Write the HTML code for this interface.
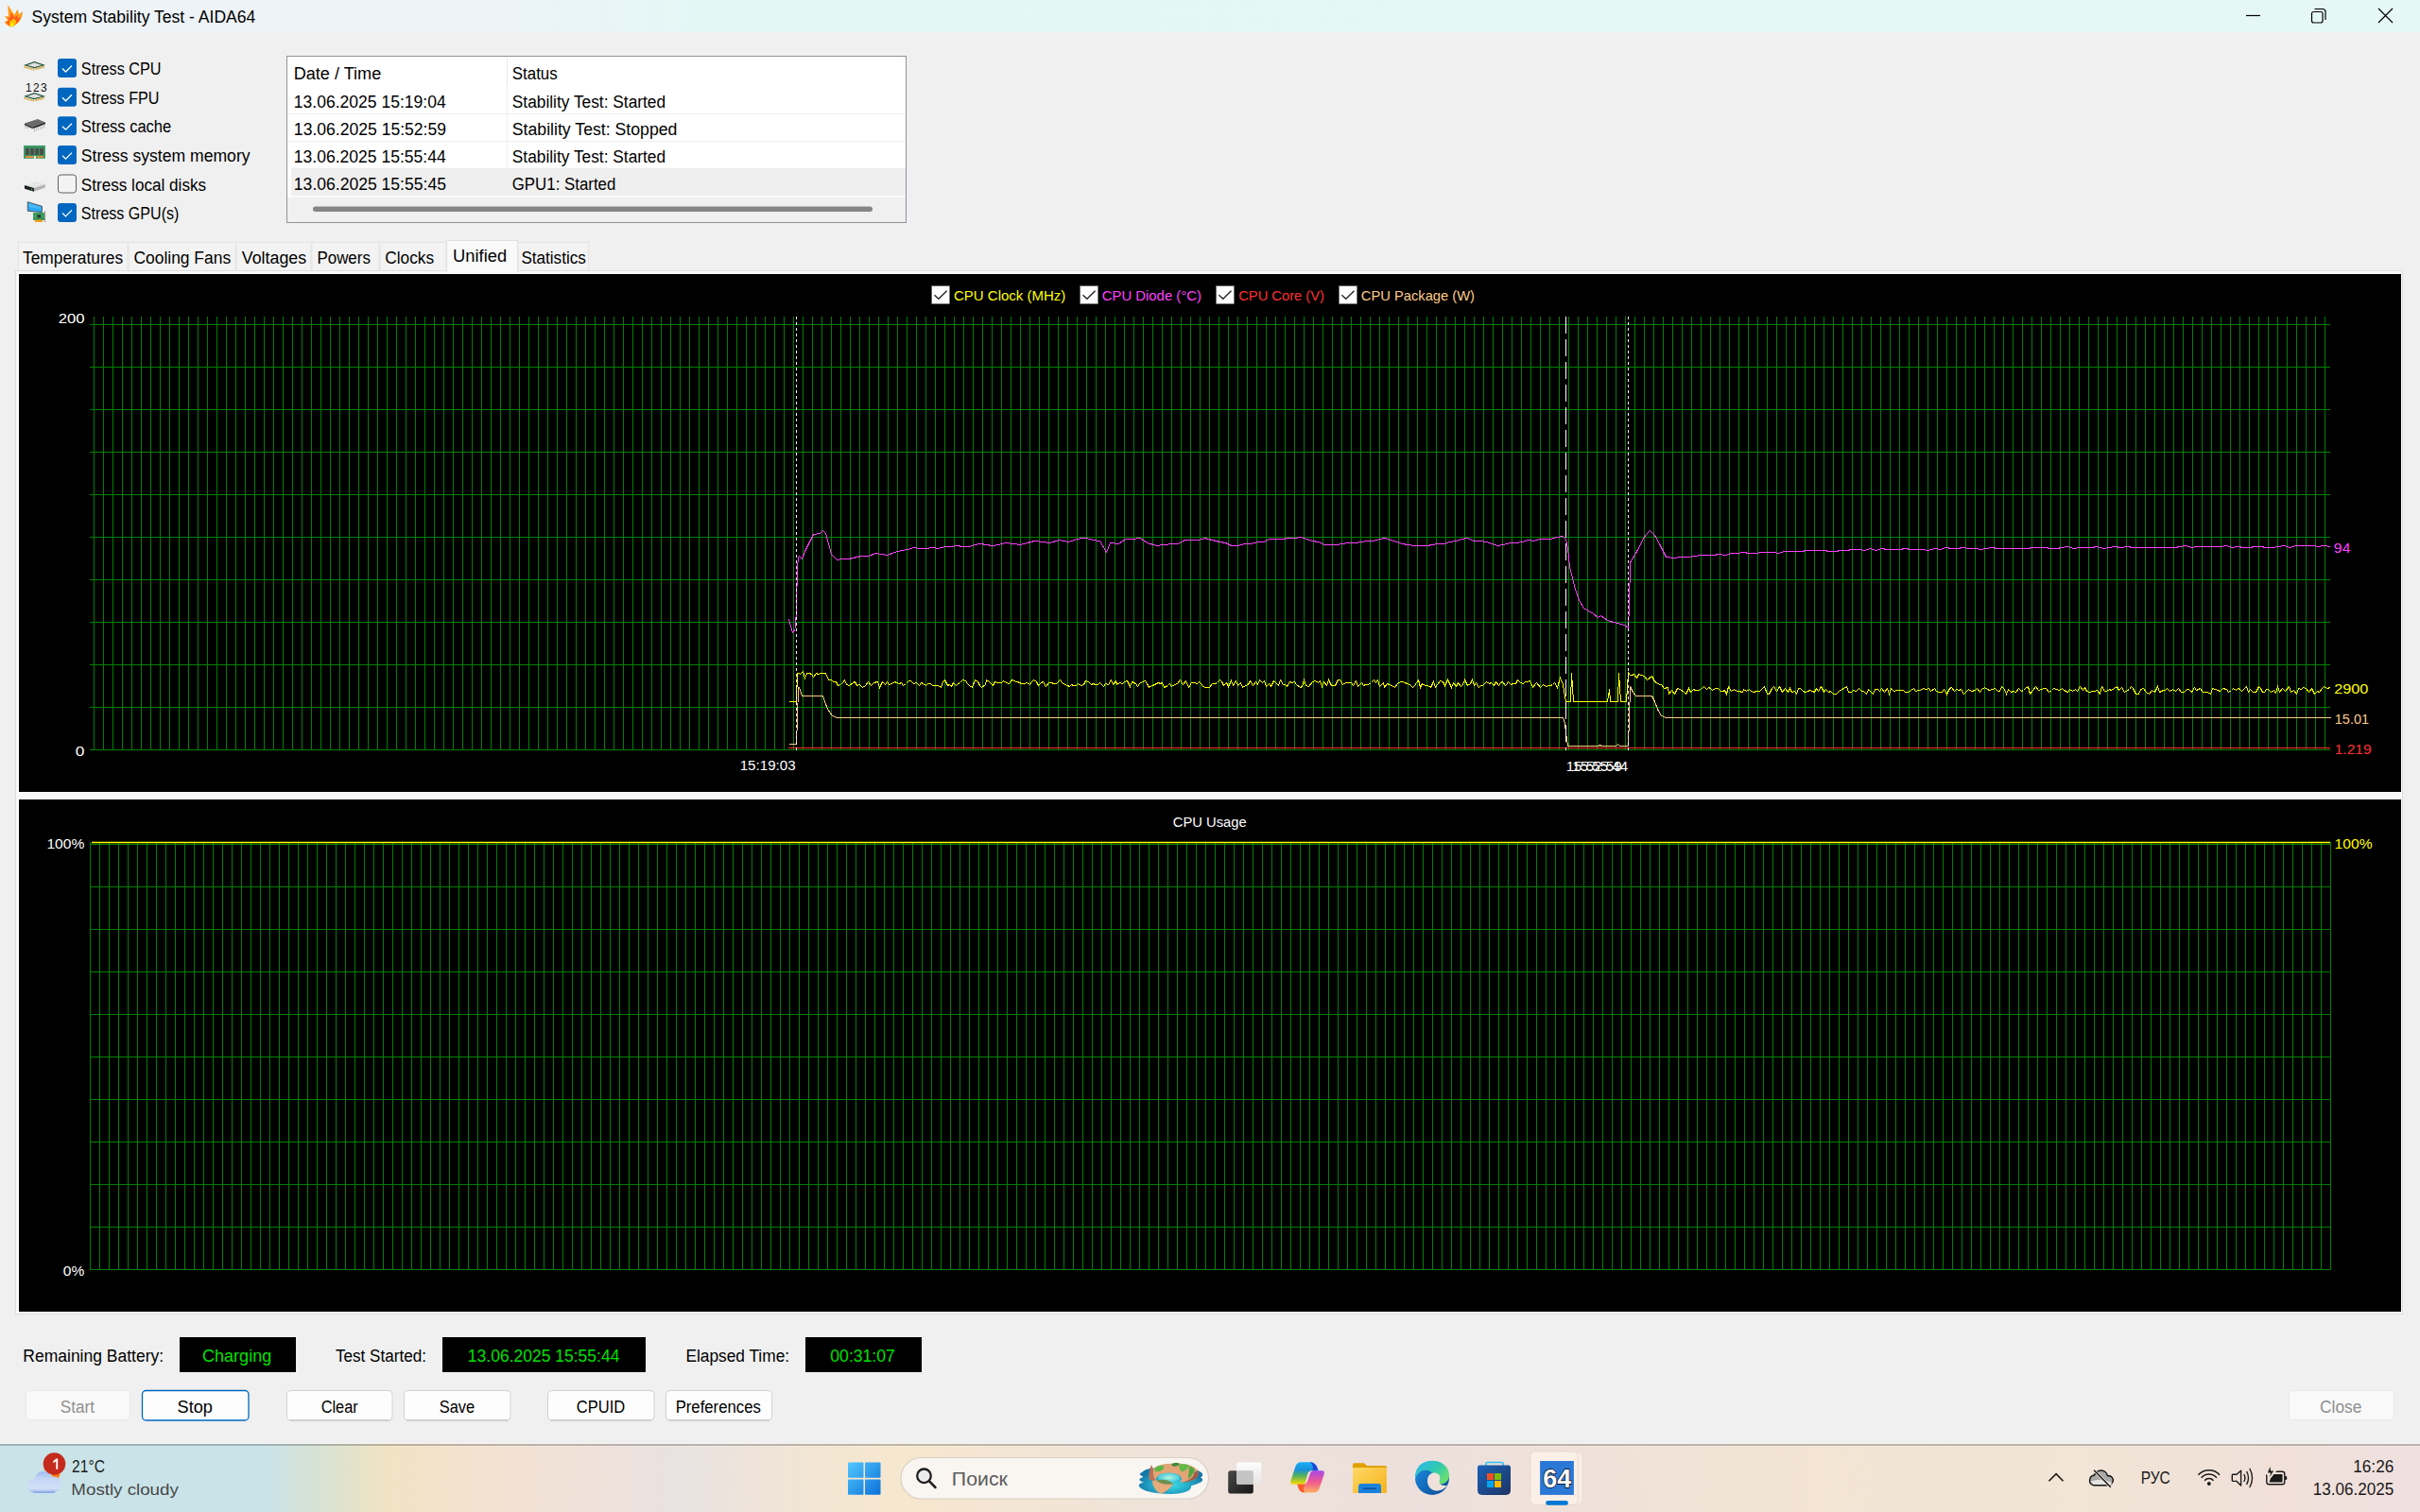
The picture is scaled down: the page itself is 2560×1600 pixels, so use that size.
<!DOCTYPE html>
<html><head><meta charset="utf-8"><title>System Stability Test - AIDA64</title>
<style>html,body{margin:0;padding:0;width:2560px;height:1600px;overflow:hidden;background:#f0f0f0}svg{display:block}text{white-space:pre}</style>
</head><body>
<svg width="2560" height="1600" viewBox="0 0 2560 1600" font-family="'Liberation Sans', sans-serif">
<defs>
<linearGradient id="tbar" x1="0" x2="2560" y1="0" y2="0" gradientUnits="userSpaceOnUse"><stop offset="0" stop-color="#eef3f6"/><stop offset="0.2" stop-color="#edf3f9"/><stop offset="0.29" stop-color="#e4f7f5"/><stop offset="1" stop-color="#e5f8f5"/></linearGradient>
<linearGradient id="task" x1="0" x2="2560" y1="0" y2="0" gradientUnits="userSpaceOnUse"><stop offset="0" stop-color="#c9e3e8"/><stop offset="0.11" stop-color="#c9e3e8"/><stop offset="0.14" stop-color="#dee2cc"/><stop offset="0.16" stop-color="#f1e3c4"/><stop offset="0.186" stop-color="#f3e2cd"/><stop offset="0.237" stop-color="#f0e1d8"/><stop offset="0.281" stop-color="#e9e2e1"/><stop offset="0.343" stop-color="#f3e6d2"/><stop offset="0.374" stop-color="#f6e7cf"/><stop offset="0.5" stop-color="#eee2dc"/><stop offset="0.586" stop-color="#ede0dc"/><stop offset="0.664" stop-color="#f0e2d8"/><stop offset="0.75" stop-color="#f3e4d4"/><stop offset="0.86" stop-color="#f2e4d6"/><stop offset="0.94" stop-color="#f0e0d8"/><stop offset="1.0" stop-color="#f0e0e0"/></linearGradient>
<linearGradient id="winlogo" x1="897" y1="1547" x2="932" y2="1582" gradientUnits="userSpaceOnUse">
 <stop offset="0" stop-color="#52c8ff"/><stop offset="1" stop-color="#0a6fd8"/>
</linearGradient>
</defs>
<rect x="0" y="0" width="2560" height="1528" fill="#f0f0f0"/>
<rect x="0" y="0" width="2560" height="34" fill="url(#tbar)"/>
<g>
<path d="M12 28.6 C8 27.4 5.5 25.5 4.8 23.3 L8.3 21.6 L4.9 17 L9 17.4 L8.3 5.3 L15.3 15.8 L18.6 9.8 L20.2 15.6 L23.9 12 C23.8 19.5 19.5 26 12 28.6 Z" fill="#ff9a1a"/>
<path d="M12 27.6 C9 26.4 7.3 24.5 7 23.2 L9.6 21.4 L8.4 18.3 L11 18.8 L11.3 13.5 L15.2 18.6 L18.3 16.3 L19 19.8 L21.8 18 C20.8 22.5 17 26 12 27.6 Z" fill="#ff5a1c"/>
<path d="M12 28.4 C10.3 27 9.6 24.5 10.2 22.4 L13.2 21 L14.6 19.2 L16.8 21.8 C17.6 24.8 15.5 27.4 12 28.4 Z" fill="#ffc400"/>
<path d="M12 28.4 C11 27.6 10.8 26.3 11.3 25.3 L13.6 24.6 C14.3 26.3 13.5 27.6 12 28.4 Z" fill="#ffff10"/>
</g>
<text x="33.60" y="24.30" font-size="18" fill="#000" textLength="236.71" lengthAdjust="spacingAndGlyphs" >System Stability Test - AIDA64</text>
<path d="M2376 16.5 H2391" stroke="#000" stroke-width="1.2"/>
<rect x="2445.5" y="12.5" width="11.5" height="11.5" rx="2" fill="none" stroke="#000" stroke-width="1.2"/>
<path d="M2448.5 9.5 H2457 Q2460 9.5 2460 12.5 V21" fill="none" stroke="#000" stroke-width="1.2"/>
<path d="M2516 9 L2531 24 M2531 9 L2516 24" stroke="#000" stroke-width="1.2"/>
<rect x="61" y="62.0" width="20" height="20" rx="3" fill="#0067c0"/>
<path d="M66 72.5 L69.5 76.0 L76 69.5" fill="none" stroke="#fff" stroke-width="1.3"/>
<text x="85.86" y="79.00" font-size="18" fill="#000" textLength="84.69" lengthAdjust="spacingAndGlyphs" >Stress CPU</text>
<rect x="61" y="92.8" width="20" height="20" rx="3" fill="#0067c0"/>
<path d="M66 103.2 L69.5 106.8 L76 100.2" fill="none" stroke="#fff" stroke-width="1.3"/>
<text x="85.87" y="109.75" font-size="18" fill="#000" textLength="82.68" lengthAdjust="spacingAndGlyphs" >Stress FPU</text>
<rect x="61" y="123.2" width="20" height="20" rx="3" fill="#0067c0"/>
<path d="M66 133.7 L69.5 137.2 L76 130.7" fill="none" stroke="#fff" stroke-width="1.3"/>
<text x="85.85" y="140.20" font-size="18" fill="#000" textLength="95.38" lengthAdjust="spacingAndGlyphs" >Stress cache</text>
<rect x="61" y="154.1" width="20" height="20" rx="3" fill="#0067c0"/>
<path d="M66 164.6 L69.5 168.1 L76 161.6" fill="none" stroke="#fff" stroke-width="1.3"/>
<text x="85.80" y="171.10" font-size="18" fill="#000" textLength="178.73" lengthAdjust="spacingAndGlyphs" >Stress system memory</text>
<rect x="61.5" y="185.0" width="19" height="19" rx="3" fill="#f3f3f3" stroke="#5e5e5e" stroke-width="1"/>
<text x="85.82" y="201.50" font-size="18" fill="#000" textLength="132.30" lengthAdjust="spacingAndGlyphs" >Stress local disks</text>
<rect x="61" y="214.9" width="20" height="20" rx="3" fill="#0067c0"/>
<path d="M66 225.4 L69.5 228.9 L76 222.4" fill="none" stroke="#fff" stroke-width="1.3"/>
<text x="85.87" y="231.90" font-size="18" fill="#000" textLength="103.53" lengthAdjust="spacingAndGlyphs" >Stress GPU(s)</text>
<path d="M25 68.9 L36.4 65 L48.1 69.1 L36.4 72.2 Z" fill="#1d5236"/><path d="M28.6 68.9 L36.4 66.3 L44.6 69.0 L36.4 71.0 Z" fill="#e0e0e0"/><path d="M26.2 69.9v2.2M28.1 70.4v2.2M30.0 70.9v2.2M31.9 71.4v2.2M33.8 71.9v2.2M35.7 72.4v2.2M38.3 71.7v2.2M40.2 71.2v2.2M42.1 70.7v2.2M44.0 70.2v2.2M45.9 69.7v2.2" stroke="#d09818" stroke-width="1.1"/>
<path d="M25 101.9 L36.4 98 L48.1 102.1 L36.4 105.2 Z" fill="#1d5236"/><path d="M28.6 101.9 L36.4 99.3 L44.6 102.0 L36.4 104.0 Z" fill="#e0e0e0"/><path d="M26.2 102.9v2.2M28.1 103.4v2.2M30.0 103.9v2.2M31.9 104.4v2.2M33.8 104.9v2.2M35.7 105.4v2.2M38.3 104.7v2.2M40.2 104.2v2.2M42.1 103.7v2.2M44.0 103.2v2.2M45.9 102.7v2.2" stroke="#d09818" stroke-width="1.1"/>
<text x="27" y="96.9" font-size="12" letter-spacing="1.3" fill="#111">123</text>
<g><path d="M26 130.6 L39.9 126.1 L48 129.4 L34.6 134.2 Z" fill="#6a6a6a"/><path d="M26 130.6 L34.6 134.2 L34.6 136.2 L26 132.6 Z" fill="#3a3a3a"/><path d="M34.6 134.2 L48 129.4 L48 131.2 L34.6 136.2 Z" fill="#222"/><path d="M36.3 135.5 V139.5 M38.4 134.8 V138.7 M40.5 134 V138 M42.6 133.2 V137.2 M44.7 132.4 V136.4 M46.8 131.6 V135.6 M27 133 V136 M29.2 133.8 V136.6" stroke="#b8b8c0" stroke-width="1"/></g>
<g><rect x="25" y="153.9" width="23" height="13.9" fill="#45a870"/><rect x="25.8" y="154.6" width="21.4" height="12.6" fill="#3a9060"/><rect x="27.1" y="157" width="3.7" height="6.8" fill="#4d4a4a"/><rect x="32.2" y="157" width="3.6" height="6.8" fill="#4d4a4a"/><rect x="37.2" y="157" width="3.6" height="6.8" fill="#4d4a4a"/><rect x="42.2" y="157" width="3.6" height="6.8" fill="#4d4a4a"/><rect x="27" y="165" width="8" height="2" fill="#e08a38"/><rect x="39" y="165" width="7" height="2" fill="#e08a38"/><rect x="35.8" y="165" width="2.2" height="2.8" fill="#f0f0f0"/></g>
<g><path d="M26 196 L38 191.9 L47.8 195 L36 199 Z" fill="#e6e6e8"/><path d="M26 196 L36 199 L36 202.8 L26 199.8 Z" fill="#1e1e1e"/><path d="M36 199 L47.8 195 L47.8 198.6 L36 202.8 Z" fill="#b4b4b6"/><circle cx="33.6" cy="200.3" r="0.9" fill="#2ab83a"/></g>
<g><path d="M29.3 213.7 L44.4 218.3 L44.4 224.6 L29.3 223.2 Z" fill="#2eaaf4" stroke="#3a3a3a" stroke-width="0.8"/><path d="M30.5 215 L43 218.8 L43 221 L30.5 219 Z" fill="#5cc4fa" opacity="0.6"/><rect x="35.1" y="225" width="12" height="7.6" fill="#3a9e5e"/><rect x="35.1" y="231.6" width="12" height="1" fill="#1f6a3a"/><rect x="39.4" y="227.3" width="3.8" height="3" fill="#333"/><rect x="37" y="232.6" width="8" height="2.4" fill="#f0a010"/><path d="M47.6 223.2 V235.2" stroke="#8a8a8a" stroke-width="0.9"/></g>
<rect x="303.5" y="59.5" width="655" height="176" fill="#fff" stroke="#8c949c" stroke-width="1"/>
<rect x="308" y="178" width="650" height="29.5" fill="#efefef"/>
<rect x="304" y="208" width="654" height="27" fill="#f0f0f0"/>
<path d="M304 208.5 H958" stroke="#fafafa" stroke-width="1"/>
<path d="M304 120.5 H958" stroke="#efefef" stroke-width="1"/>
<path d="M304 149.5 H958" stroke="#efefef" stroke-width="1"/>
<path d="M536.5 61 V92" stroke="#e8e8e8" stroke-width="1"/>
<path d="M536.5 93 V178" stroke="#f0f0f0" stroke-width="1"/>
<rect x="331" y="218.5" width="592" height="5.5" rx="2.75" fill="#858585"/>
<text x="310.72" y="84.10" font-size="18" fill="#000" textLength="92.49" lengthAdjust="spacingAndGlyphs" >Date / Time</text>
<text x="541.83" y="84.10" font-size="18" fill="#000" textLength="47.88" lengthAdjust="spacingAndGlyphs" >Status</text>
<text x="310.86" y="114.10" font-size="18" fill="#000" textLength="160.85" lengthAdjust="spacingAndGlyphs" >13.06.2025 15:19:04</text>
<text x="541.81" y="114.10" font-size="18" fill="#000" textLength="162.30" lengthAdjust="spacingAndGlyphs" >Stability Test: Started</text>
<text x="310.86" y="142.60" font-size="18" fill="#000" textLength="161.17" lengthAdjust="spacingAndGlyphs" >13.06.2025 15:52:59</text>
<text x="541.80" y="142.60" font-size="18" fill="#000" textLength="174.64" lengthAdjust="spacingAndGlyphs" >Stability Test: Stopped</text>
<text x="310.86" y="171.70" font-size="18" fill="#000" textLength="160.85" lengthAdjust="spacingAndGlyphs" >13.06.2025 15:55:44</text>
<text x="541.81" y="171.70" font-size="18" fill="#000" textLength="162.30" lengthAdjust="spacingAndGlyphs" >Stability Test: Started</text>
<text x="310.86" y="200.70" font-size="18" fill="#000" textLength="161.07" lengthAdjust="spacingAndGlyphs" >13.06.2025 15:55:45</text>
<text x="541.75" y="200.70" font-size="18" fill="#000" textLength="109.63" lengthAdjust="spacingAndGlyphs" >GPU1: Started</text>
<rect x="19.5" y="256.5" width="115.5" height="30" fill="#f3f3f3" stroke="#e3e3e3" stroke-width="1"/>
<rect x="136.0" y="256.5" width="113.0" height="30" fill="#f3f3f3" stroke="#e3e3e3" stroke-width="1"/>
<rect x="250.0" y="256.5" width="79.0" height="30" fill="#f3f3f3" stroke="#e3e3e3" stroke-width="1"/>
<rect x="330.0" y="256.5" width="71.0" height="30" fill="#f3f3f3" stroke="#e3e3e3" stroke-width="1"/>
<rect x="402.0" y="256.5" width="70.0" height="30" fill="#f3f3f3" stroke="#e3e3e3" stroke-width="1"/>
<rect x="548.0" y="256.5" width="74.5" height="30" fill="#f3f3f3" stroke="#e3e3e3" stroke-width="1"/>
<rect x="16.5" y="286.5" width="2525" height="1104" fill="#f8f8f8" stroke="#dedede" stroke-width="1"/>
<rect x="473" y="255" width="74" height="33" fill="#f9f9f9"/>
<path d="M472.5 288 V254.5 H547.5 V288" fill="none" stroke="#e0e0e0" stroke-width="1"/>
<text x="24.01" y="278.90" font-size="18" fill="#000" textLength="106.12" lengthAdjust="spacingAndGlyphs" >Temperatures</text>
<text x="141.41" y="278.90" font-size="18" fill="#000" textLength="102.72" lengthAdjust="spacingAndGlyphs" >Cooling Fans</text>
<text x="255.82" y="278.90" font-size="18" fill="#000" textLength="68.32" lengthAdjust="spacingAndGlyphs" >Voltages</text>
<text x="335.41" y="278.90" font-size="18" fill="#000" textLength="56.50" lengthAdjust="spacingAndGlyphs" >Powers</text>
<text x="407.32" y="278.90" font-size="18" fill="#000" textLength="51.80" lengthAdjust="spacingAndGlyphs" >Clocks</text>
<text x="479.09" y="276.70" font-size="18" fill="#000" textLength="56.99" lengthAdjust="spacingAndGlyphs" >Unified</text>
<text x="551.42" y="278.90" font-size="18" fill="#000" textLength="68.39" lengthAdjust="spacingAndGlyphs" >Statistics</text>
<rect x="19.5" y="289.5" width="2521" height="549" fill="#000" stroke="#fff" stroke-width="1"/>
<rect x="19.5" y="845.5" width="2521" height="543" fill="#000" stroke="#fff" stroke-width="1"/>
<path d="M99.5 335V794M109.5 335V794M119.5 335V794M129.5 335V794M139.5 335V794M149.5 335V794M159.5 335V794M169.5 335V794M179.5 335V794M189.5 335V794M199.5 335V794M209.5 335V794M219.5 335V794M229.5 335V794M239.5 335V794M249.5 335V794M259.5 335V794M269.5 335V794M279.5 335V794M289.5 335V794M299.5 335V794M309.5 335V794M319.5 335V794M329.5 335V794M339.5 335V794M349.5 335V794M359.5 335V794M369.5 335V794M379.5 335V794M389.5 335V794M399.5 335V794M409.5 335V794M419.5 335V794M429.5 335V794M439.5 335V794M449.5 335V794M459.5 335V794M469.5 335V794M479.5 335V794M489.5 335V794M499.5 335V794M509.5 335V794M519.5 335V794M529.5 335V794M539.5 335V794M549.5 335V794M559.5 335V794M569.5 335V794M579.5 335V794M589.5 335V794M599.5 335V794M609.5 335V794M619.5 335V794M629.5 335V794M639.5 335V794M649.5 335V794M659.5 335V794M669.5 335V794M679.5 335V794M689.5 335V794M699.5 335V794M709.5 335V794M719.5 335V794M729.5 335V794M739.5 335V794M749.5 335V794M759.5 335V794M769.5 335V794M779.5 335V794M789.5 335V794M799.5 335V794M809.5 335V794M819.5 335V794M829.5 335V794M839.5 335V794M849.5 335V794M859.5 335V794M869.5 335V794M879.5 335V794M889.5 335V794M899.5 335V794M909.5 335V794M919.5 335V794M929.5 335V794M939.5 335V794M949.5 335V794M959.5 335V794M969.5 335V794M979.5 335V794M989.5 335V794M999.5 335V794M1009.5 335V794M1019.5 335V794M1029.5 335V794M1039.5 335V794M1049.5 335V794M1059.5 335V794M1069.5 335V794M1079.5 335V794M1089.5 335V794M1099.5 335V794M1109.5 335V794M1119.5 335V794M1129.5 335V794M1139.5 335V794M1149.5 335V794M1159.5 335V794M1169.5 335V794M1179.5 335V794M1189.5 335V794M1199.5 335V794M1209.5 335V794M1219.5 335V794M1229.5 335V794M1239.5 335V794M1249.5 335V794M1259.5 335V794M1269.5 335V794M1279.5 335V794M1289.5 335V794M1299.5 335V794M1309.5 335V794M1319.5 335V794M1329.5 335V794M1339.5 335V794M1349.5 335V794M1359.5 335V794M1369.5 335V794M1379.5 335V794M1389.5 335V794M1399.5 335V794M1409.5 335V794M1419.5 335V794M1429.5 335V794M1439.5 335V794M1449.5 335V794M1459.5 335V794M1469.5 335V794M1479.5 335V794M1489.5 335V794M1499.5 335V794M1509.5 335V794M1519.5 335V794M1529.5 335V794M1539.5 335V794M1549.5 335V794M1559.5 335V794M1569.5 335V794M1579.5 335V794M1589.5 335V794M1599.5 335V794M1609.5 335V794M1619.5 335V794M1629.5 335V794M1639.5 335V794M1649.5 335V794M1659.5 335V794M1669.5 335V794M1679.5 335V794M1689.5 335V794M1699.5 335V794M1709.5 335V794M1719.5 335V794M1729.5 335V794M1739.5 335V794M1749.5 335V794M1759.5 335V794M1769.5 335V794M1779.5 335V794M1789.5 335V794M1799.5 335V794M1809.5 335V794M1819.5 335V794M1829.5 335V794M1839.5 335V794M1849.5 335V794M1859.5 335V794M1869.5 335V794M1879.5 335V794M1889.5 335V794M1899.5 335V794M1909.5 335V794M1919.5 335V794M1929.5 335V794M1939.5 335V794M1949.5 335V794M1959.5 335V794M1969.5 335V794M1979.5 335V794M1989.5 335V794M1999.5 335V794M2009.5 335V794M2019.5 335V794M2029.5 335V794M2039.5 335V794M2049.5 335V794M2059.5 335V794M2069.5 335V794M2079.5 335V794M2089.5 335V794M2099.5 335V794M2109.5 335V794M2119.5 335V794M2129.5 335V794M2139.5 335V794M2149.5 335V794M2159.5 335V794M2169.5 335V794M2179.5 335V794M2189.5 335V794M2199.5 335V794M2209.5 335V794M2219.5 335V794M2229.5 335V794M2239.5 335V794M2249.5 335V794M2259.5 335V794M2269.5 335V794M2279.5 335V794M2289.5 335V794M2299.5 335V794M2309.5 335V794M2319.5 335V794M2329.5 335V794M2339.5 335V794M2349.5 335V794M2359.5 335V794M2369.5 335V794M2379.5 335V794M2389.5 335V794M2399.5 335V794M2409.5 335V794M2419.5 335V794M2429.5 335V794M2439.5 335V794M2449.5 335V794M2459.5 335V794M95 343.5H2465M95 388.5H2465M95 433.5H2465M95 478.5H2465M95 523.5H2465M95 568.5H2465M95 613.5H2465M95 658.5H2465M95 703.5H2465M95 748.5H2465M95 793.5H2465" stroke="#008000" stroke-width="1" shape-rendering="crispEdges"/>
<path d="M95.5 891V1344M105.5 891V1344M115.5 891V1344M125.5 891V1344M135.5 891V1344M145.5 891V1344M155.5 891V1344M165.5 891V1344M175.5 891V1344M185.5 891V1344M195.5 891V1344M205.5 891V1344M215.5 891V1344M225.5 891V1344M235.5 891V1344M245.5 891V1344M255.5 891V1344M265.5 891V1344M275.5 891V1344M285.5 891V1344M295.5 891V1344M305.5 891V1344M315.5 891V1344M325.5 891V1344M335.5 891V1344M345.5 891V1344M355.5 891V1344M365.5 891V1344M375.5 891V1344M385.5 891V1344M395.5 891V1344M405.5 891V1344M415.5 891V1344M425.5 891V1344M435.5 891V1344M445.5 891V1344M455.5 891V1344M465.5 891V1344M475.5 891V1344M485.5 891V1344M495.5 891V1344M505.5 891V1344M515.5 891V1344M525.5 891V1344M535.5 891V1344M545.5 891V1344M555.5 891V1344M565.5 891V1344M575.5 891V1344M585.5 891V1344M595.5 891V1344M605.5 891V1344M615.5 891V1344M625.5 891V1344M635.5 891V1344M645.5 891V1344M655.5 891V1344M665.5 891V1344M675.5 891V1344M685.5 891V1344M695.5 891V1344M705.5 891V1344M715.5 891V1344M725.5 891V1344M735.5 891V1344M745.5 891V1344M755.5 891V1344M765.5 891V1344M775.5 891V1344M785.5 891V1344M795.5 891V1344M805.5 891V1344M815.5 891V1344M825.5 891V1344M835.5 891V1344M845.5 891V1344M855.5 891V1344M865.5 891V1344M875.5 891V1344M885.5 891V1344M895.5 891V1344M905.5 891V1344M915.5 891V1344M925.5 891V1344M935.5 891V1344M945.5 891V1344M955.5 891V1344M965.5 891V1344M975.5 891V1344M985.5 891V1344M995.5 891V1344M1005.5 891V1344M1015.5 891V1344M1025.5 891V1344M1035.5 891V1344M1045.5 891V1344M1055.5 891V1344M1065.5 891V1344M1075.5 891V1344M1085.5 891V1344M1095.5 891V1344M1105.5 891V1344M1115.5 891V1344M1125.5 891V1344M1135.5 891V1344M1145.5 891V1344M1155.5 891V1344M1165.5 891V1344M1175.5 891V1344M1185.5 891V1344M1195.5 891V1344M1205.5 891V1344M1215.5 891V1344M1225.5 891V1344M1235.5 891V1344M1245.5 891V1344M1255.5 891V1344M1265.5 891V1344M1275.5 891V1344M1285.5 891V1344M1295.5 891V1344M1305.5 891V1344M1315.5 891V1344M1325.5 891V1344M1335.5 891V1344M1345.5 891V1344M1355.5 891V1344M1365.5 891V1344M1375.5 891V1344M1385.5 891V1344M1395.5 891V1344M1405.5 891V1344M1415.5 891V1344M1425.5 891V1344M1435.5 891V1344M1445.5 891V1344M1455.5 891V1344M1465.5 891V1344M1475.5 891V1344M1485.5 891V1344M1495.5 891V1344M1505.5 891V1344M1515.5 891V1344M1525.5 891V1344M1535.5 891V1344M1545.5 891V1344M1555.5 891V1344M1565.5 891V1344M1575.5 891V1344M1585.5 891V1344M1595.5 891V1344M1605.5 891V1344M1615.5 891V1344M1625.5 891V1344M1635.5 891V1344M1645.5 891V1344M1655.5 891V1344M1665.5 891V1344M1675.5 891V1344M1685.5 891V1344M1695.5 891V1344M1705.5 891V1344M1715.5 891V1344M1725.5 891V1344M1735.5 891V1344M1745.5 891V1344M1755.5 891V1344M1765.5 891V1344M1775.5 891V1344M1785.5 891V1344M1795.5 891V1344M1805.5 891V1344M1815.5 891V1344M1825.5 891V1344M1835.5 891V1344M1845.5 891V1344M1855.5 891V1344M1865.5 891V1344M1875.5 891V1344M1885.5 891V1344M1895.5 891V1344M1905.5 891V1344M1915.5 891V1344M1925.5 891V1344M1935.5 891V1344M1945.5 891V1344M1955.5 891V1344M1965.5 891V1344M1975.5 891V1344M1985.5 891V1344M1995.5 891V1344M2005.5 891V1344M2015.5 891V1344M2025.5 891V1344M2035.5 891V1344M2045.5 891V1344M2055.5 891V1344M2065.5 891V1344M2075.5 891V1344M2085.5 891V1344M2095.5 891V1344M2105.5 891V1344M2115.5 891V1344M2125.5 891V1344M2135.5 891V1344M2145.5 891V1344M2155.5 891V1344M2165.5 891V1344M2175.5 891V1344M2185.5 891V1344M2195.5 891V1344M2205.5 891V1344M2215.5 891V1344M2225.5 891V1344M2235.5 891V1344M2245.5 891V1344M2255.5 891V1344M2265.5 891V1344M2275.5 891V1344M2285.5 891V1344M2295.5 891V1344M2305.5 891V1344M2315.5 891V1344M2325.5 891V1344M2335.5 891V1344M2345.5 891V1344M2355.5 891V1344M2365.5 891V1344M2375.5 891V1344M2385.5 891V1344M2395.5 891V1344M2405.5 891V1344M2415.5 891V1344M2425.5 891V1344M2435.5 891V1344M2445.5 891V1344M2455.5 891V1344M2465.5 891V1344M95 893.5H2466M95 938.5H2466M95 983.5H2466M95 1028.5H2466M95 1073.5H2466M95 1118.5H2466M95 1163.5H2466M95 1208.5H2466M95 1253.5H2466M95 1298.5H2466M95 1343.5H2466" stroke="#008000" stroke-width="1" shape-rendering="crispEdges"/>
<path d="M97 891.5H2465" stroke="#ffff00" stroke-width="1.3"/>
<text x="61.66" y="341.80" font-size="15.5" fill="#fff" textLength="27.79" lengthAdjust="spacingAndGlyphs" >200</text>
<text x="79.72" y="799.80" font-size="15.5" fill="#fff" textLength="9.66" lengthAdjust="spacingAndGlyphs" >0</text>
<text x="782.65" y="815.00" font-size="15.5" fill="#fff" textLength="59.02" lengthAdjust="spacingAndGlyphs" >15:19:03</text>
<text x="1656.64" y="815.90" font-size="15.5" fill="#fff" textLength="59.07" lengthAdjust="spacingAndGlyphs" >15:52:59</text>
<text x="1663.35" y="815.90" font-size="15.5" fill="#fff" textLength="58.69" lengthAdjust="spacingAndGlyphs" >15:55:44</text>
<text x="2468.86" y="584.80" font-size="15.5" fill="#ff40ff" textLength="17.60" lengthAdjust="spacingAndGlyphs" >94</text>
<text x="2469.18" y="733.90" font-size="15.5" fill="#ffff00" textLength="36.26" lengthAdjust="spacingAndGlyphs" >2900</text>
<text x="2469.80" y="766.00" font-size="15.5" fill="#ffcc88" textLength="36.21" lengthAdjust="spacingAndGlyphs" >15.01</text>
<text x="2469.72" y="798.00" font-size="15.5" fill="#ff3030" textLength="38.82" lengthAdjust="spacingAndGlyphs" >1.219</text>
<rect x="985.6" y="302.6" width="19" height="19" fill="#fff" stroke="#666" stroke-width="0.6"/>
<path d="M988.5 312.3 L992.9 316.3 L1001.6 307.8" fill="none" stroke="#2a2a2a" stroke-width="1.5"/>
<text x="1008.94" y="318.40" font-size="15.5" fill="#ffff00" textLength="118.39" lengthAdjust="spacingAndGlyphs" >CPU Clock (MHz)</text>
<rect x="1142.6" y="302.6" width="19" height="19" fill="#fff" stroke="#666" stroke-width="0.6"/>
<path d="M1145.5 312.3 L1149.8999999999999 316.3 L1158.6 307.8" fill="none" stroke="#2a2a2a" stroke-width="1.5"/>
<text x="1165.74" y="318.40" font-size="15.5" fill="#ff40ff" textLength="105.18" lengthAdjust="spacingAndGlyphs" >CPU Diode (°C)</text>
<rect x="1286.5" y="302.6" width="19" height="19" fill="#fff" stroke="#666" stroke-width="0.6"/>
<path d="M1289.4 312.3 L1293.8 316.3 L1302.5 307.8" fill="none" stroke="#2a2a2a" stroke-width="1.5"/>
<text x="1310.25" y="318.40" font-size="15.5" fill="#ff3030" textLength="90.66" lengthAdjust="spacingAndGlyphs" >CPU Core (V)</text>
<rect x="1416.5" y="302.6" width="19" height="19" fill="#fff" stroke="#666" stroke-width="0.6"/>
<path d="M1419.4 312.3 L1423.8 316.3 L1432.5 307.8" fill="none" stroke="#2a2a2a" stroke-width="1.5"/>
<text x="1439.85" y="318.40" font-size="15.5" fill="#ffcc88" textLength="120.06" lengthAdjust="spacingAndGlyphs" >CPU Package (W)</text>
<text x="1240.85" y="874.80" font-size="15.5" fill="#fff" textLength="77.80" lengthAdjust="spacingAndGlyphs" >CPU Usage</text>
<text x="49.41" y="898.00" font-size="15.5" fill="#fff" textLength="39.95" lengthAdjust="spacingAndGlyphs" >100%</text>
<text x="66.89" y="1350.00" font-size="15.5" fill="#fff" textLength="22.46" lengthAdjust="spacingAndGlyphs" >0%</text>
<text x="2469.61" y="898.00" font-size="15.5" fill="#ffff00" textLength="39.95" lengthAdjust="spacingAndGlyphs" >100%</text>
<path d="M834.5 655.5 L838.5 669.5 L841.5 665.5 L842.5 640.5 L843.5 600.5 L844.5 589.5 L845.5 588.5 L848.5 591.5 L851.5 583.5 L857.5 571.5 L860.5 565.5 L867.5 564.5 L870.5 561.5 L873.5 564.5 L879.5 586.5 L885.5 592.5 L891.5 591.5 L898.5 591.5 L910.5 588.5 L918.5 588.5 L926.5 585.5 L938.5 587.5 L946.5 584.5 L953.5 582.5 L960.5 581.5 L966.5 579.5 L973.5 580.5 L979.5 580.5 L986.5 579.5 L992.5 580.5 L999.5 578.5 L1005.5 578.5 L1012.5 577.5 L1018.5 578.5 L1025.5 578.5 L1031.5 576.5 L1037.5 575.5 L1049.5 577.5 L1056.5 576.5 L1063.5 574.5 L1071.5 575.5 L1079.5 576.5 L1086.5 574.5 L1094.5 572.5 L1102.5 573.5 L1110.5 574.5 L1120.5 571.5 L1130.5 573.5 L1136.5 571.5 L1143.5 569.5 L1149.5 569.5 L1156.5 571.5 L1163.5 572.5 L1170.5 584.5 L1174.5 574.5 L1183.5 575.5 L1190.5 570.5 L1198.5 570.5 L1206.5 569.5 L1213.5 574.5 L1223.5 577.5 L1231.5 576.5 L1240.5 575.5 L1246.5 575.5 L1253.5 571.5 L1260.5 571.5 L1267.5 571.5 L1274.5 569.5 L1282.5 571.5 L1290.5 573.5 L1296.5 574.5 L1302.5 577.5 L1309.5 577.5 L1316.5 575.5 L1323.5 575.5 L1330.5 573.5 L1336.5 573.5 L1343.5 570.5 L1349.5 570.5 L1356.5 570.5 L1362.5 569.5 L1369.5 569.5 L1376.5 568.5 L1382.5 570.5 L1388.5 572.5 L1394.5 573.5 L1401.5 576.5 L1407.5 576.5 L1413.5 576.5 L1420.5 575.5 L1426.5 574.5 L1433.5 574.5 L1440.5 573.5 L1446.5 572.5 L1452.5 572.5 L1459.5 570.5 L1465.5 569.5 L1474.5 572.5 L1483.5 575.5 L1489.5 576.5 L1496.5 577.5 L1502.5 577.5 L1509.5 577.5 L1515.5 576.5 L1521.5 575.5 L1527.5 575.5 L1533.5 573.5 L1540.5 572.5 L1546.5 570.5 L1552.5 569.5 L1559.5 572.5 L1565.5 572.5 L1572.5 573.5 L1578.5 575.5 L1584.5 577.5 L1590.5 576.5 L1597.5 574.5 L1603.5 574.5 L1610.5 573.5 L1616.5 571.5 L1622.5 572.5 L1628.5 570.5 L1634.5 570.5 L1640.5 570.5 L1646.5 568.5 L1653.5 567.5 L1656.5 570.5 L1658.5 580.5 L1660.5 599.5 L1665.5 620.5 L1670.5 635.5 L1675.5 643.5 L1685.5 649.5 L1690.5 653.5 L1693.5 651.5 L1700.5 656.5 L1710.5 659.5 L1715.5 660.5 L1718.5 661.5 L1722.5 664.5 L1723.5 640.5 L1724.5 595.5 L1730.5 585.5 L1740.5 566.5 L1745.5 561.5 L1750.5 566.5 L1756.5 577.5 L1762.5 589.5 L1770.5 590.5 L1777.5 589.5 L1785.5 589.5 L1792.5 588.5 L1800.5 587.5 L1806.5 587.5 L1812.5 587.5 L1818.5 586.5 L1825.5 587.5 L1831.5 585.5 L1837.5 585.5 L1844.5 584.5 L1850.5 585.5 L1856.5 585.5 L1863.5 584.5 L1869.5 584.5 L1875.5 584.5 L1881.5 585.5 L1887.5 583.5 L1893.5 583.5 L1899.5 583.5 L1905.5 583.5 L1911.5 582.5 L1917.5 582.5 L1923.5 582.5 L1929.5 582.5 L1935.5 583.5 L1941.5 583.5 L1947.5 582.5 L1953.5 582.5 L1959.5 581.5 L1966.5 581.5 L1972.5 582.5 L1978.5 580.5 L1984.5 582.5 L1990.5 580.5 L1996.5 581.5 L2002.5 581.5 L2009.5 581.5 L2015.5 580.5 L2021.5 581.5 L2027.5 581.5 L2033.5 581.5 L2039.5 582.5 L2046.5 580.5 L2052.5 581.5 L2058.5 579.5 L2064.5 580.5 L2070.5 580.5 L2076.5 579.5 L2083.5 580.5 L2089.5 580.5 L2095.5 581.5 L2101.5 580.5 L2107.5 579.5 L2113.5 580.5 L2120.5 580.5 L2126.5 580.5 L2132.5 580.5 L2138.5 580.5 L2144.5 580.5 L2150.5 579.5 L2156.5 579.5 L2163.5 579.5 L2169.5 580.5 L2175.5 580.5 L2181.5 579.5 L2187.5 578.5 L2193.5 580.5 L2200.5 579.5 L2206.5 579.5 L2212.5 579.5 L2218.5 578.5 L2225.5 580.5 L2231.5 579.5 L2237.5 578.5 L2243.5 579.5 L2250.5 578.5 L2256.5 579.5 L2262.5 579.5 L2268.5 579.5 L2275.5 579.5 L2281.5 579.5 L2287.5 579.5 L2293.5 579.5 L2300.5 579.5 L2306.5 578.5 L2312.5 577.5 L2318.5 579.5 L2324.5 578.5 L2330.5 578.5 L2336.5 578.5 L2342.5 578.5 L2348.5 578.5 L2355.5 577.5 L2361.5 579.5 L2367.5 578.5 L2373.5 579.5 L2379.5 579.5 L2385.5 578.5 L2391.5 578.5 L2397.5 579.5 L2403.5 579.5 L2410.5 578.5 L2416.5 577.5 L2422.5 579.5 L2428.5 577.5 L2434.5 577.5 L2440.5 577.5 L2446.5 577.5 L2452.5 578.5 L2458.5 577.5 L2465.5 578.5" fill="none" stroke="#ff40ff" stroke-width="1" shape-rendering="crispEdges"/>
<path d="M834.5 742.5 L842.5 742.5 L843.5 712.5 L845.5 712.5 L846.5 713.5 L849.5 710.5 L851.5 717.5 L853.5 712.5 L856.5 712.5 L858.5 713.5 L860.5 716.5 L863.5 712.5 L865.5 713.5 L868.5 712.5 L871.5 712.5 L873.5 712.5 L876.5 719.5 L879.5 719.5 L881.5 721.5 L884.5 721.5 L886.5 725.5 L889.5 724.5 L891.5 722.5 L893.5 719.5 L895.5 724.5 L898.5 725.5 L902.5 722.5 L904.5 721.5 L906.5 725.5 L909.5 724.5 L912.5 727.5 L915.5 725.5 L918.5 721.5 L921.5 725.5 L924.5 722.5 L928.5 721.5 L930.5 727.5 L933.5 721.5 L936.5 724.5 L938.5 721.5 L940.5 724.5 L943.5 723.5 L946.5 721.5 L948.5 722.5 L951.5 723.5 L953.5 722.5 L955.5 725.5 L958.5 723.5 L961.5 720.5 L963.5 720.5 L966.5 723.5 L969.5 722.5 L972.5 725.5 L974.5 722.5 L976.5 723.5 L979.5 725.5 L981.5 723.5 L984.5 723.5 L986.5 725.5 L989.5 725.5 L992.5 725.5 L995.5 727.5 L997.5 721.5 L999.5 719.5 L1002.5 725.5 L1004.5 724.5 L1006.5 726.5 L1008.5 722.5 L1011.5 725.5 L1013.5 723.5 L1015.5 722.5 L1018.5 719.5 L1021.5 720.5 L1023.5 723.5 L1025.5 725.5 L1028.5 727.5 L1031.5 719.5 L1034.5 721.5 L1036.5 725.5 L1038.5 727.5 L1042.5 724.5 L1043.5 719.5 L1046.5 721.5 L1050.5 725.5 L1052.5 721.5 L1055.5 722.5 L1057.5 722.5 L1059.5 722.5 L1061.5 720.5 L1064.5 722.5 L1067.5 723.5 L1069.5 720.5 L1071.5 719.5 L1074.5 721.5 L1076.5 721.5 L1080.5 723.5 L1083.5 723.5 L1086.5 722.5 L1089.5 724.5 L1091.5 721.5 L1093.5 719.5 L1096.5 721.5 L1098.5 725.5 L1101.5 722.5 L1103.5 721.5 L1106.5 726.5 L1109.5 722.5 L1112.5 722.5 L1114.5 723.5 L1117.5 723.5 L1119.5 721.5 L1121.5 719.5 L1123.5 722.5 L1126.5 724.5 L1129.5 725.5 L1131.5 726.5 L1133.5 724.5 L1135.5 725.5 L1138.5 725.5 L1140.5 723.5 L1143.5 725.5 L1146.5 724.5 L1148.5 720.5 L1151.5 721.5 L1154.5 724.5 L1156.5 723.5 L1158.5 724.5 L1161.5 724.5 L1163.5 722.5 L1165.5 724.5 L1167.5 726.5 L1169.5 723.5 L1172.5 724.5 L1175.5 719.5 L1177.5 724.5 L1180.5 720.5 L1181.5 724.5 L1184.5 722.5 L1187.5 723.5 L1189.5 721.5 L1192.5 720.5 L1195.5 726.5 L1197.5 721.5 L1201.5 723.5 L1203.5 726.5 L1205.5 723.5 L1208.5 721.5 L1211.5 720.5 L1213.5 723.5 L1215.5 727.5 L1218.5 725.5 L1219.5 725.5 L1221.5 724.5 L1225.5 722.5 L1227.5 723.5 L1229.5 722.5 L1231.5 727.5 L1235.5 725.5 L1237.5 723.5 L1239.5 726.5 L1242.5 724.5 L1245.5 723.5 L1248.5 719.5 L1251.5 724.5 L1254.5 720.5 L1257.5 727.5 L1260.5 722.5 L1263.5 722.5 L1266.5 723.5 L1268.5 721.5 L1270.5 723.5 L1272.5 726.5 L1275.5 727.5 L1277.5 727.5 L1279.5 727.5 L1282.5 723.5 L1285.5 723.5 L1287.5 722.5 L1290.5 719.5 L1292.5 721.5 L1294.5 725.5 L1297.5 722.5 L1299.5 726.5 L1302.5 720.5 L1304.5 725.5 L1307.5 720.5 L1309.5 725.5 L1312.5 722.5 L1314.5 727.5 L1317.5 725.5 L1320.5 724.5 L1322.5 720.5 L1325.5 725.5 L1328.5 721.5 L1330.5 724.5 L1332.5 719.5 L1335.5 722.5 L1337.5 720.5 L1339.5 726.5 L1342.5 723.5 L1344.5 726.5 L1347.5 720.5 L1350.5 723.5 L1352.5 725.5 L1354.5 719.5 L1357.5 724.5 L1359.5 724.5 L1361.5 726.5 L1364.5 721.5 L1366.5 722.5 L1369.5 721.5 L1371.5 724.5 L1375.5 727.5 L1377.5 726.5 L1379.5 719.5 L1381.5 725.5 L1384.5 726.5 L1388.5 721.5 L1391.5 720.5 L1394.5 722.5 L1396.5 720.5 L1398.5 726.5 L1400.5 721.5 L1403.5 725.5 L1405.5 719.5 L1408.5 725.5 L1410.5 725.5 L1412.5 725.5 L1415.5 719.5 L1417.5 719.5 L1420.5 724.5 L1423.5 722.5 L1426.5 722.5 L1429.5 722.5 L1431.5 725.5 L1434.5 720.5 L1436.5 726.5 L1440.5 722.5 L1442.5 725.5 L1444.5 724.5 L1447.5 724.5 L1450.5 722.5 L1453.5 719.5 L1455.5 722.5 L1457.5 719.5 L1459.5 726.5 L1463.5 722.5 L1464.5 727.5 L1467.5 723.5 L1469.5 724.5 L1472.5 725.5 L1475.5 727.5 L1478.5 723.5 L1481.5 721.5 L1483.5 721.5 L1486.5 722.5 L1488.5 723.5 L1491.5 724.5 L1494.5 727.5 L1496.5 725.5 L1500.5 719.5 L1502.5 727.5 L1504.5 723.5 L1507.5 725.5 L1510.5 725.5 L1513.5 727.5 L1516.5 721.5 L1518.5 727.5 L1520.5 724.5 L1523.5 720.5 L1526.5 721.5 L1528.5 725.5 L1531.5 719.5 L1533.5 723.5 L1535.5 727.5 L1537.5 722.5 L1540.5 726.5 L1542.5 722.5 L1545.5 726.5 L1547.5 724.5 L1549.5 719.5 L1552.5 725.5 L1555.5 723.5 L1557.5 719.5 L1559.5 725.5 L1561.5 722.5 L1564.5 727.5 L1566.5 725.5 L1568.5 725.5 L1572.5 721.5 L1575.5 723.5 L1577.5 722.5 L1580.5 725.5 L1582.5 721.5 L1585.5 725.5 L1587.5 722.5 L1589.5 721.5 L1592.5 725.5 L1593.5 724.5 L1595.5 721.5 L1598.5 724.5 L1600.5 723.5 L1603.5 723.5 L1605.5 719.5 L1608.5 722.5 L1611.5 723.5 L1613.5 721.5 L1615.5 721.5 L1618.5 720.5 L1621.5 727.5 L1624.5 723.5 L1625.5 722.5 L1629.5 727.5 L1632.5 724.5 L1635.5 726.5 L1638.5 725.5 L1640.5 725.5 L1642.5 724.5 L1644.5 722.5 L1647.5 727.5 L1650.5 717.5 L1653.5 724.5 L1656.5 742.5 L1661.5 742.5 L1662.5 712.5 L1664.5 742.5 L1700.5 742.5 L1702.5 729.5 L1703.5 742.5 L1711.5 742.5 L1712.5 712.5 L1714.5 742.5 L1720.5 742.5 L1722.5 711.5 L1724.5 714.5 L1726.5 714.5 L1728.5 713.5 L1731.5 717.5 L1733.5 713.5 L1736.5 714.5 L1739.5 715.5 L1742.5 719.5 L1747.5 715.5 L1750.5 721.5 L1752.5 722.5 L1755.5 724.5 L1757.5 724.5 L1760.5 728.5 L1764.5 727.5 L1765.5 734.5 L1768.5 730.5 L1771.5 734.5 L1774.5 728.5 L1775.5 728.5 L1778.5 730.5 L1780.5 731.5 L1783.5 734.5 L1786.5 728.5 L1788.5 732.5 L1791.5 729.5 L1793.5 730.5 L1796.5 730.5 L1799.5 729.5 L1802.5 726.5 L1805.5 729.5 L1807.5 727.5 L1809.5 728.5 L1811.5 730.5 L1814.5 728.5 L1817.5 728.5 L1820.5 731.5 L1822.5 731.5 L1824.5 730.5 L1826.5 734.5 L1828.5 726.5 L1831.5 731.5 L1834.5 729.5 L1837.5 731.5 L1839.5 731.5 L1843.5 732.5 L1844.5 729.5 L1847.5 731.5 L1850.5 729.5 L1852.5 731.5 L1855.5 732.5 L1857.5 731.5 L1861.5 731.5 L1863.5 729.5 L1866.5 726.5 L1869.5 734.5 L1871.5 734.5 L1874.5 728.5 L1876.5 726.5 L1879.5 731.5 L1882.5 726.5 L1885.5 732.5 L1888.5 728.5 L1891.5 732.5 L1893.5 728.5 L1895.5 732.5 L1898.5 731.5 L1900.5 734.5 L1902.5 728.5 L1904.5 728.5 L1907.5 731.5 L1909.5 732.5 L1912.5 731.5 L1914.5 730.5 L1917.5 731.5 L1919.5 732.5 L1921.5 728.5 L1923.5 731.5 L1926.5 726.5 L1929.5 732.5 L1931.5 729.5 L1934.5 732.5 L1936.5 731.5 L1939.5 734.5 L1942.5 734.5 L1945.5 731.5 L1948.5 729.5 L1950.5 728.5 L1953.5 726.5 L1955.5 732.5 L1958.5 732.5 L1960.5 730.5 L1963.5 731.5 L1966.5 728.5 L1969.5 731.5 L1971.5 731.5 L1974.5 734.5 L1976.5 729.5 L1978.5 731.5 L1981.5 734.5 L1983.5 729.5 L1986.5 729.5 L1988.5 731.5 L1990.5 728.5 L1993.5 732.5 L1996.5 728.5 L1998.5 734.5 L2000.5 728.5 L2003.5 731.5 L2006.5 730.5 L2008.5 730.5 L2011.5 730.5 L2013.5 730.5 L2015.5 732.5 L2018.5 732.5 L2021.5 730.5 L2024.5 728.5 L2026.5 731.5 L2029.5 730.5 L2031.5 730.5 L2034.5 728.5 L2037.5 729.5 L2040.5 728.5 L2042.5 731.5 L2046.5 728.5 L2048.5 731.5 L2051.5 732.5 L2054.5 732.5 L2056.5 729.5 L2059.5 734.5 L2062.5 728.5 L2064.5 727.5 L2067.5 731.5 L2069.5 729.5 L2072.5 730.5 L2074.5 729.5 L2077.5 734.5 L2080.5 731.5 L2082.5 729.5 L2085.5 731.5 L2089.5 730.5 L2091.5 728.5 L2094.5 732.5 L2096.5 729.5 L2099.5 727.5 L2102.5 729.5 L2104.5 730.5 L2107.5 729.5 L2110.5 728.5 L2113.5 731.5 L2115.5 731.5 L2117.5 726.5 L2120.5 729.5 L2122.5 734.5 L2124.5 729.5 L2127.5 732.5 L2129.5 731.5 L2132.5 732.5 L2135.5 728.5 L2138.5 731.5 L2140.5 730.5 L2142.5 728.5 L2145.5 726.5 L2147.5 734.5 L2150.5 730.5 L2153.5 726.5 L2156.5 730.5 L2159.5 729.5 L2162.5 728.5 L2164.5 728.5 L2167.5 732.5 L2170.5 730.5 L2172.5 728.5 L2175.5 729.5 L2178.5 730.5 L2181.5 728.5 L2183.5 730.5 L2187.5 732.5 L2189.5 729.5 L2192.5 731.5 L2195.5 729.5 L2197.5 731.5 L2200.5 726.5 L2203.5 730.5 L2205.5 727.5 L2207.5 731.5 L2210.5 732.5 L2213.5 731.5 L2215.5 731.5 L2218.5 730.5 L2221.5 734.5 L2223.5 726.5 L2226.5 731.5 L2228.5 731.5 L2231.5 729.5 L2233.5 730.5 L2236.5 728.5 L2239.5 726.5 L2241.5 730.5 L2244.5 727.5 L2247.5 732.5 L2250.5 730.5 L2252.5 729.5 L2254.5 726.5 L2256.5 728.5 L2259.5 734.5 L2262.5 734.5 L2264.5 729.5 L2267.5 728.5 L2270.5 732.5 L2273.5 734.5 L2276.5 730.5 L2279.5 732.5 L2282.5 726.5 L2284.5 732.5 L2286.5 731.5 L2288.5 730.5 L2290.5 730.5 L2292.5 728.5 L2295.5 731.5 L2298.5 729.5 L2301.5 731.5 L2304.5 728.5 L2307.5 732.5 L2310.5 732.5 L2313.5 729.5 L2315.5 729.5 L2318.5 732.5 L2321.5 727.5 L2323.5 730.5 L2327.5 728.5 L2330.5 732.5 L2332.5 732.5 L2335.5 732.5 L2338.5 734.5 L2340.5 728.5 L2343.5 729.5 L2346.5 730.5 L2348.5 731.5 L2351.5 728.5 L2355.5 729.5 L2357.5 732.5 L2360.5 730.5 L2362.5 728.5 L2365.5 730.5 L2367.5 728.5 L2369.5 729.5 L2371.5 731.5 L2373.5 729.5 L2376.5 726.5 L2378.5 732.5 L2380.5 729.5 L2383.5 732.5 L2386.5 732.5 L2389.5 726.5 L2391.5 728.5 L2393.5 732.5 L2395.5 732.5 L2397.5 729.5 L2399.5 729.5 L2402.5 732.5 L2405.5 730.5 L2407.5 733.5 L2409.5 726.5 L2411.5 732.5 L2414.5 728.5 L2417.5 731.5 L2421.5 726.5 L2423.5 732.5 L2426.5 730.5 L2429.5 734.5 L2431.5 728.5 L2434.5 729.5 L2436.5 727.5 L2439.5 728.5 L2442.5 732.5 L2445.5 728.5 L2448.5 734.5 L2451.5 731.5 L2453.5 732.5 L2456.5 728.5 L2458.5 726.5 L2461.5 728.5 L2465.5 727.5" fill="none" stroke="#ffff00" stroke-width="1" shape-rendering="crispEdges"/>
<path d="M834.5 787.5 L842.5 787.5 L843.5 760.5 L844.5 727.5 L845.5 727.5 L848.5 736.5 L870.5 736.5 L872.5 742.5 L875.5 750.5 L880.5 757.5 L885.5 759.5 L1653.5 759.5 L1655.5 765.5 L1656.5 775.5 L1658.5 789.5 L1690.5 789.5 L1692.5 788.5 L1694.5 789.5 L1709.5 789.5 L1711.5 787.5 L1713.5 789.5 L1722.5 789.5 L1723.5 760.5 L1724.5 726.5 L1727.5 732.5 L1730.5 736.5 L1747.5 736.5 L1750.5 742.5 L1753.5 750.5 L1757.5 757.5 L1762.5 759.5 L2465.5 759.5" fill="none" stroke="#ffcc88" stroke-width="1" shape-rendering="crispEdges"/>
<path d="M834 791.5 H2465" stroke="#ff3030" stroke-width="1" shape-rendering="crispEdges"/>
<path d="M842.5 335 V794" stroke="#fff" stroke-width="1" stroke-dasharray="3 3" shape-rendering="crispEdges"/>
<path d="M1656.5 335 V794" stroke="#fff" stroke-width="1" stroke-dasharray="18 6" shape-rendering="crispEdges"/>
<path d="M1722.5 335 V794" stroke="#fff" stroke-width="1" stroke-dasharray="3 3" shape-rendering="crispEdges"/>
<text x="24.37" y="1441.30" font-size="18" fill="#000" textLength="148.73" lengthAdjust="spacingAndGlyphs" >Remaining Battery:</text>
<rect x="190" y="1415" width="123" height="37" fill="#000"/>
<text x="214.09" y="1441.30" font-size="18" fill="#00e000" textLength="73.08" lengthAdjust="spacingAndGlyphs" >Charging</text>
<text x="355.02" y="1441.30" font-size="18" fill="#000" textLength="95.94" lengthAdjust="spacingAndGlyphs" >Test Started:</text>
<rect x="468" y="1415" width="215" height="37" fill="#000"/>
<text x="494.87" y="1441.30" font-size="18" fill="#00e000" textLength="160.55" lengthAdjust="spacingAndGlyphs" >13.06.2025 15:55:44</text>
<text x="725.38" y="1441.30" font-size="18" fill="#000" textLength="109.70" lengthAdjust="spacingAndGlyphs" >Elapsed Time:</text>
<rect x="852" y="1415" width="123" height="37" fill="#000"/>
<text x="878.31" y="1441.30" font-size="18" fill="#00e000" textLength="68.57" lengthAdjust="spacingAndGlyphs" >00:31:07</text>
<rect x="27.5" y="1471.5" width="110" height="31" rx="4" fill="#f9f9f9" stroke="#e9e9e9" stroke-width="1"/>
<text x="63.72" y="1495.00" font-size="18" fill="#8f8f8f" textLength="36.20" lengthAdjust="spacingAndGlyphs" >Start</text>
<rect x="150.5" y="1471.5" width="112.5" height="31.5" rx="4" fill="#fdfdfd" stroke="#0067c0" stroke-width="1.3"/>
<text x="187.57" y="1495.00" font-size="18" fill="#000" textLength="37.39" lengthAdjust="spacingAndGlyphs" >Stop</text>
<rect x="303.5" y="1471.5" width="111.5" height="31.5" rx="4" fill="#fdfdfd" stroke="#d1d1d1" stroke-width="1"/>
<path d="M306 1503 H412.5" stroke="#bdbdbd" stroke-width="1"/>
<text x="339.67" y="1495.00" font-size="18" fill="#000" textLength="39.10" lengthAdjust="spacingAndGlyphs" >Clear</text>
<rect x="427.5" y="1471.5" width="112.5" height="31.5" rx="4" fill="#fdfdfd" stroke="#d1d1d1" stroke-width="1"/>
<path d="M430 1503 H537.5" stroke="#bdbdbd" stroke-width="1"/>
<text x="464.75" y="1495.00" font-size="18" fill="#000" textLength="37.48" lengthAdjust="spacingAndGlyphs" >Save</text>
<rect x="579.5" y="1471.5" width="112.5" height="31.5" rx="4" fill="#fdfdfd" stroke="#d1d1d1" stroke-width="1"/>
<path d="M582 1503 H689.5" stroke="#bdbdbd" stroke-width="1"/>
<text x="609.76" y="1495.00" font-size="18" fill="#000" textLength="51.43" lengthAdjust="spacingAndGlyphs" >CPUID</text>
<rect x="704.5" y="1471.5" width="112" height="31.5" rx="4" fill="#fdfdfd" stroke="#d1d1d1" stroke-width="1"/>
<path d="M707 1503 H814" stroke="#bdbdbd" stroke-width="1"/>
<text x="714.63" y="1495.00" font-size="18" fill="#000" textLength="90.18" lengthAdjust="spacingAndGlyphs" >Preferences</text>
<rect x="2421.5" y="1471.5" width="111" height="31" rx="4" fill="#f9f9f9" stroke="#e9e9e9" stroke-width="1"/>
<text x="2454.12" y="1495.00" font-size="18" fill="#8f8f8f" textLength="44.25" lengthAdjust="spacingAndGlyphs" >Close</text>
<rect x="0" y="1527" width="2560" height="1" fill="#f4f4f4"/>
<rect x="0" y="1528" width="2560" height="72" fill="url(#task)"/>
<rect x="0" y="1528" width="2560" height="2" fill="#000" fill-opacity="0.22"/>
<rect x="0" y="1530" width="2560" height="1" fill="#fff" fill-opacity="0.2"/>
<defs>
<linearGradient id="cloudg2" x1="0" y1="1556" x2="0" y2="1580" gradientUnits="userSpaceOnUse"><stop offset="0" stop-color="#9ab8f0"/><stop offset="0.35" stop-color="#c4d4f4"/><stop offset="0.8" stop-color="#d4e0f8"/><stop offset="1" stop-color="#8eaee8"/></linearGradient>
<linearGradient id="tvblack" x1="0" y1="0" x2="1" y2="1"><stop offset="0" stop-color="#4a4a4a"/><stop offset="1" stop-color="#161616"/></linearGradient>
<linearGradient id="tvwhite" x1="0" y1="0" x2="0" y2="1"><stop offset="0" stop-color="#ffffff" stop-opacity="0.95"/><stop offset="1" stop-color="#e6e6e6" stop-opacity="0.85"/></linearGradient>
<linearGradient id="cpL" x1="0" y1="0" x2="0" y2="1"><stop offset="0" stop-color="#18b0f8"/><stop offset="0.35" stop-color="#1a90d8"/><stop offset="0.6" stop-color="#50b060"/><stop offset="1" stop-color="#f8d800"/></linearGradient>
<linearGradient id="cpR" x1="0" y1="0" x2="0" y2="1"><stop offset="0" stop-color="#a848e8"/><stop offset="0.5" stop-color="#f05890"/><stop offset="1" stop-color="#ffb060"/></linearGradient>
<linearGradient id="fold" x1="0" y1="0" x2="1" y2="1"><stop offset="0" stop-color="#ffd866"/><stop offset="1" stop-color="#f5b21a"/></linearGradient>
<linearGradient id="edgeA" x1="0" y1="0" x2="1" y2="0.6"><stop offset="0" stop-color="#2fb8f0"/><stop offset="0.6" stop-color="#30c8b0"/><stop offset="1" stop-color="#66e070"/></linearGradient>
<linearGradient id="edgeB" x1="0" y1="0" x2="1" y2="1"><stop offset="0" stop-color="#1a90e0"/><stop offset="1" stop-color="#0c4a98"/></linearGradient>
<linearGradient id="storeg" x1="0" y1="0" x2="1" y2="1"><stop offset="0" stop-color="#1a62b8"/><stop offset="1" stop-color="#1e3464"/></linearGradient>
<radialGradient id="water" cx="0.5" cy="0.65" r="0.55"><stop offset="0" stop-color="#38e0e8"/><stop offset="1" stop-color="#1478a8"/></radialGradient>
<radialGradient id="lagoon" cx="0.5" cy="0.5" r="0.5"><stop offset="0" stop-color="#b8f4d8"/><stop offset="1" stop-color="#40c8e0"/></radialGradient>
</defs>
<path d="M46 1556 l2 -2 l2 2 z" fill="#f0b020"/>
<circle cx="59" cy="1560" r="4.5" fill="#ff7a10"/>
<g fill="url(#cloudg2)"><circle cx="36" cy="1572.4" r="7"/><circle cx="46" cy="1566.2" r="9.4"/><circle cx="56.8" cy="1570.5" r="8"/><rect x="33" y="1569" width="26" height="10.4" rx="2"/></g>
<path d="M36 1579.2 H58" stroke="#7fa0e4" stroke-width="1.2"/>
<circle cx="57.5" cy="1549" r="11.8" fill="#c42b1c"/>
<path d="M56.2 1546.2 L59.4 1543.6 L61.2 1543.6 L61.2 1554.7 L59.3 1554.7 L59.3 1546.3 L56.2 1548.3 Z" fill="#fff"/>
<rect x="897" y="1547.5" width="16.5" height="16.3" rx="1" fill="url(#winlogo)"/>
<rect x="915" y="1547.5" width="16.5" height="16.3" rx="1" fill="url(#winlogo)"/>
<rect x="897" y="1565.5" width="16.5" height="16.3" rx="1" fill="url(#winlogo)"/>
<rect x="915" y="1565.5" width="16.5" height="16.3" rx="1" fill="url(#winlogo)"/>
<rect x="953" y="1542.5" width="325.5" height="43.5" rx="21.75" fill="#f9f6f2" stroke="#d9cfc4" stroke-width="1.2"/>
<circle cx="977.5" cy="1561.8" r="7.3" fill="#ececec" stroke="#1e1e1e" stroke-width="2.3"/>
<path d="M982.8 1567.2 L989.5 1574" stroke="#1e1e1e" stroke-width="2.5" stroke-linecap="round"/>
<g>
<path d="M1208 1558 C1212 1553.5 1222 1553 1230 1553 C1246 1552.5 1262 1553 1269 1557 C1273 1559 1273 1562 1270 1563.5 C1273 1565 1273 1567.5 1269 1569 C1265 1571 1262 1571.5 1260 1572.5 C1261 1577 1254 1580.9 1238 1580.9 C1222 1580.9 1208 1578 1205 1573 C1204 1570.5 1207 1569 1210 1568.5 C1206 1567.5 1204.5 1566 1206 1564.5 C1208.5 1563.5 1210 1563 1208.5 1562 C1205 1561 1205 1559.5 1208 1558 Z" fill="url(#water)"/>
<path d="M1216 1566 C1214 1557 1222 1550 1234 1549 C1248 1547.5 1262 1549 1267 1556 C1270 1561 1266 1566 1256 1568 L1248 1568.5 C1252 1565 1250 1559.5 1238 1559 C1228 1559 1222 1562 1223 1567 Z" fill="#e3a476"/>
<path d="M1256 1568 C1266 1566 1270 1561 1267 1556 L1263 1558.5 C1263 1563 1259 1566.5 1251 1568.4 Z" fill="#9c5c4c"/>
<path d="M1216 1566 C1214.5 1560 1216.5 1553 1218 1550 L1220 1556 C1219 1560 1220.5 1564 1223 1567 Z" fill="#b87058"/>
<path d="M1221 1556 C1222 1551.5 1227 1550 1231 1551 C1232 1553.5 1230 1556.5 1226 1557 C1224 1557.3 1222 1557 1221 1556 Z" fill="#5cb844"/>
<path d="M1239 1549.5 C1242 1547.6 1246 1547.8 1248 1549 C1247 1551 1244 1552 1240.5 1551.5 Z" fill="#3e8a3a"/>
<path d="M1247 1550 C1251 1548.5 1256 1549 1258 1551 C1257 1554.5 1253 1557.5 1249.5 1557 C1248 1555 1247 1552.5 1247 1550 Z" fill="#62ba48"/>
<path d="M1258 1552 C1261 1552 1263.5 1554 1264 1556 C1262 1559 1260 1563 1257 1565 C1257 1561 1258 1556 1258 1552 Z" fill="#4ea840"/>
<ellipse cx="1236.5" cy="1563.6" rx="11.8" ry="5.2" fill="url(#lagoon)"/>
<path d="M1219 1567.5 C1224 1565 1236 1565 1241.5 1570.5 C1238 1574 1233 1580 1228 1580.5 C1223 1578.5 1219 1573 1219 1567.5 Z" fill="#e8ac7c"/>
<path d="M1234 1578 C1237 1575 1240 1572 1241.5 1570.5 C1238 1574 1233 1580 1228 1580.5 Z" fill="#8a4c4c"/>
<path d="M1223 1567 C1228 1564.8 1236 1565 1241.5 1570.5 C1236 1571.5 1228 1570.5 1223 1567 Z" fill="#6a9050"/>
</g>
<rect x="1299.2" y="1556.3" width="26.6" height="24.3" rx="2.5" fill="url(#tvblack)"/>
<rect x="1308.1" y="1547.5" width="26.3" height="23.2" rx="2" fill="url(#tvwhite)"/>
<rect x="1308.1" y="1556.3" width="17.7" height="14.4" rx="1.5" fill="#c4c4c4"/>
<path d="M1376 1547.2 L1385.5 1547.2 C1389 1547.2 1391.5 1549 1393 1552 L1394.6 1556.3 L1388 1556.3 C1385.5 1556.3 1384 1557.5 1383.2 1560 L1380.2 1570.7 L1367.5 1570.7 C1365.5 1570.7 1364.8 1569 1365.4 1567 L1370.5 1551.5 C1371.5 1548.8 1373.5 1547.2 1376 1547.2 Z" fill="url(#cpL)"/>
<path d="M1385 1547.2 C1389 1547.2 1391.5 1549 1393 1552 L1394.6 1556.3 L1388.5 1556.3 C1389.5 1552 1388.5 1548.5 1385 1547.2 Z" fill="#1a48d8"/>
<path d="M1390 1556.3 L1398.5 1556.3 C1400.5 1556.3 1401.3 1558 1400.7 1560 L1395.5 1575.5 C1394.5 1578.2 1392.5 1579.6 1390 1579.6 L1380.5 1579.6 C1377 1579.6 1374.8 1577.8 1373.5 1574.5 L1372.5 1570.7 L1378.5 1570.7 C1381 1570.7 1382.5 1569.3 1383.3 1567 L1386 1559 C1386.8 1557.2 1388 1556.3 1390 1556.3 Z" fill="url(#cpR)"/>
<path d="M1372.5 1570.7 L1380.2 1570.7 L1379 1574.5 C1378.5 1576.5 1379 1578.5 1380.5 1579.6 C1377 1579.6 1374.8 1577.8 1373.5 1574.5 Z" fill="#f85a28"/>
<path d="M1431 1550 Q1431 1548.2 1433 1548.2 L1443 1548.2 L1446 1551 L1465 1551 Q1466.9 1551 1466.9 1553 L1466.9 1554 L1431 1554 Z" fill="#e0a000"/>
<rect x="1431" y="1553" width="35.9" height="27.1" rx="1.2" fill="url(#fold)"/>
<path d="M1437 1580.1 L1437 1573 Q1437 1570 1440 1570 L1458 1570 Q1461 1570 1461 1573 L1461 1580.1 Z" fill="#1a82dc"/>
<rect x="1442" y="1574.5" width="14" height="1.6" fill="#0c4f9a"/>
<circle cx="1515" cy="1563.9" r="18" fill="url(#edgeB)"/>
<path d="M1497.2 1566 C1496 1553 1504 1545.8 1515 1545.8 C1526 1545.8 1533 1553 1533 1561 C1533 1567.5 1528 1570.5 1523 1570.5 C1518 1570.5 1515.5 1568 1516.5 1564.5 C1518 1560 1513 1555.2 1507 1555.8 C1501.5 1556.4 1498 1561 1497.2 1566 Z" fill="url(#edgeA)"/>
<path d="M1510 1567 C1510 1561.5 1514 1558 1518.5 1558.6 C1522.5 1559.2 1524.5 1563 1523 1566 C1521.5 1569.5 1524 1572.5 1530.8 1572 C1527 1577 1521 1578.5 1516.5 1577 C1512.5 1575.5 1510 1571.5 1510 1567 Z" fill="#f0e2da"/>
<path d="M1572 1554 L1572 1549 Q1572 1547.5 1573.5 1547.5 L1588.5 1547.5 Q1590 1547.5 1590 1549 L1590 1554" fill="none" stroke="#2cc0f8" stroke-width="1.6"/>
<path d="M1563 1553 Q1563 1550.5 1565.5 1550.5 L1595.5 1550.5 Q1598 1550.5 1598 1553 L1598 1577 Q1598 1581.9 1593 1581.9 L1568 1581.9 Q1563 1581.9 1563 1577 Z" fill="url(#storeg)"/>
<rect x="1573" y="1559" width="7" height="7" fill="#f25022"/><rect x="1581" y="1559" width="7" height="7" fill="#7fba00"/><rect x="1573" y="1567" width="7" height="7" fill="#00a4ef"/><rect x="1581" y="1567" width="7" height="7" fill="#ffb900"/>
<rect x="1622" y="1536.5" width="52.5" height="55.5" rx="5" fill="#f6ece4" stroke="#e4d6c8" stroke-width="0.8"/>
<rect x="1619" y="1536" width="50" height="56.3" rx="5" fill="#faf0e8" stroke="#e6d8ca" stroke-width="0.8"/>
<rect x="1629.1" y="1546" width="35.8" height="35.9" fill="#2b78d6"/>
<text x="1647.2" y="1574.2" font-size="28" font-weight="bold" fill="#fff" stroke="#000" stroke-width="1.3" paint-order="stroke" text-anchor="middle" textLength="30" lengthAdjust="spacingAndGlyphs">64</text>
<rect x="1635.2" y="1588.1" width="23.7" height="4.6" rx="2.3" fill="#0078d4"/>
<path d="M2167.4 1567.3 L2175.1 1559.6 L2182.5 1567.3" fill="none" stroke="#1a1a1a" stroke-width="1.6"/>
<path d="M2215 1571.7 C2209 1571.7 2209 1562 2215.5 1561 C2217 1556.5 2223 1554.5 2227 1557.5 C2228.5 1558.5 2229 1560 2229.5 1561.5 C2234.5 1561.5 2236 1565 2235 1568 C2234 1570.5 2232 1571.7 2229.5 1571.7 Z" fill="#a8a8a8" stroke="#111" stroke-width="1.4"/>
<path d="M2211.5 1568 C2218 1565 2226 1565.5 2234.5 1569 L2233 1571 L2215 1571 Z" fill="#e4e4e4"/>
<path d="M2215.1 1555.8 L2232.8 1573.8" stroke="#f2e6da" stroke-width="3"/><path d="M2215.1 1555.8 L2232.8 1573.8" stroke="#111" stroke-width="1.4"/>
<path d="M2332.04 1566.72 A6.4 6.4 0 0 1 2341.56 1566.72" fill="none" stroke="#1a1a1a" stroke-width="1.5"/>
<path d="M2328.70 1563.71 A10.9 10.9 0 0 1 2344.90 1563.71" fill="none" stroke="#1a1a1a" stroke-width="1.5"/>
<path d="M2325.43 1560.76 A15.3 15.3 0 0 1 2348.17 1560.76" fill="none" stroke="#1a1a1a" stroke-width="1.5"/>
<circle cx="2336.8" cy="1570" r="1.9" fill="#1a1a1a"/>
<path d="M2362 1560.2 L2366 1560.2 L2370.6 1556.2 L2370.6 1572 L2366 1567.4 L2362 1567.4 Q2361.3 1567.4 2361.3 1566.6 L2361.3 1561 Q2361.3 1560.2 2362 1560.2 Z" fill="none" stroke="#1a1a1a" stroke-width="1.4" stroke-linejoin="round"/>
<path d="M2373.8 1560.0 Q2376.0 1564 2373.8 1568.0" fill="none" stroke="#1a1a1a" stroke-width="1.4"/>
<path d="M2376.6 1557.0 Q2380.4 1564 2376.6 1571.0" fill="none" stroke="#1a1a1a" stroke-width="1.4"/>
<path d="M2379.8 1554.0 Q2385.3 1564 2379.8 1574.0" fill="none" stroke="#1a1a1a" stroke-width="1.4"/>
<rect x="2397.8" y="1557.2" width="19" height="13.6" rx="2.6" fill="none" stroke="#1a1a1a" stroke-width="1.4"/>
<rect x="2417" y="1562" width="2.2" height="4" rx="1" fill="#1a1a1a"/>
<path d="M2400.5 1568.5 L2403.5 1560 L2414.5 1560 L2414.5 1568.5 Z" fill="#1a1a1a"/>
<path d="M2396 1559 L2400 1556.5 L2403.5 1551.5 L2405 1556 L2407.5 1556 L2401.5 1563.5" fill="#f0e2d8" stroke="#f0e2d8" stroke-width="2"/>
<path d="M2401.5 1552 L2398.8 1558.5 L2402.2 1558.5 L2400.7 1563.2 L2405.2 1556.5 L2402 1556.5 Z" fill="#1a1a1a"/>
<text x="76.12" y="1557.70" font-size="18.5" fill="#1c1c1c" textLength="34.78" lengthAdjust="spacingAndGlyphs" >21°C</text>
<text x="75.36" y="1581.90" font-size="17.3" fill="#474747" textLength="113.47" lengthAdjust="spacingAndGlyphs" >Mostly cloudy</text>
<text x="1006.87" y="1571.80" font-size="21" fill="#5c5c5c" textLength="59.02" lengthAdjust="spacingAndGlyphs" >Поиск</text>
<text x="2264.63" y="1570.40" font-size="17.6" fill="#1a1a1a" textLength="31.06" lengthAdjust="spacingAndGlyphs" >РУС</text>
<text x="2489.29" y="1557.50" font-size="17.6" fill="#1a1a1a" textLength="42.96" lengthAdjust="spacingAndGlyphs" >16:26</text>
<text x="2446.70" y="1581.50" font-size="17.6" fill="#1a1a1a" textLength="85.52" lengthAdjust="spacingAndGlyphs" >13.06.2025</text>
</svg>
</body></html>
